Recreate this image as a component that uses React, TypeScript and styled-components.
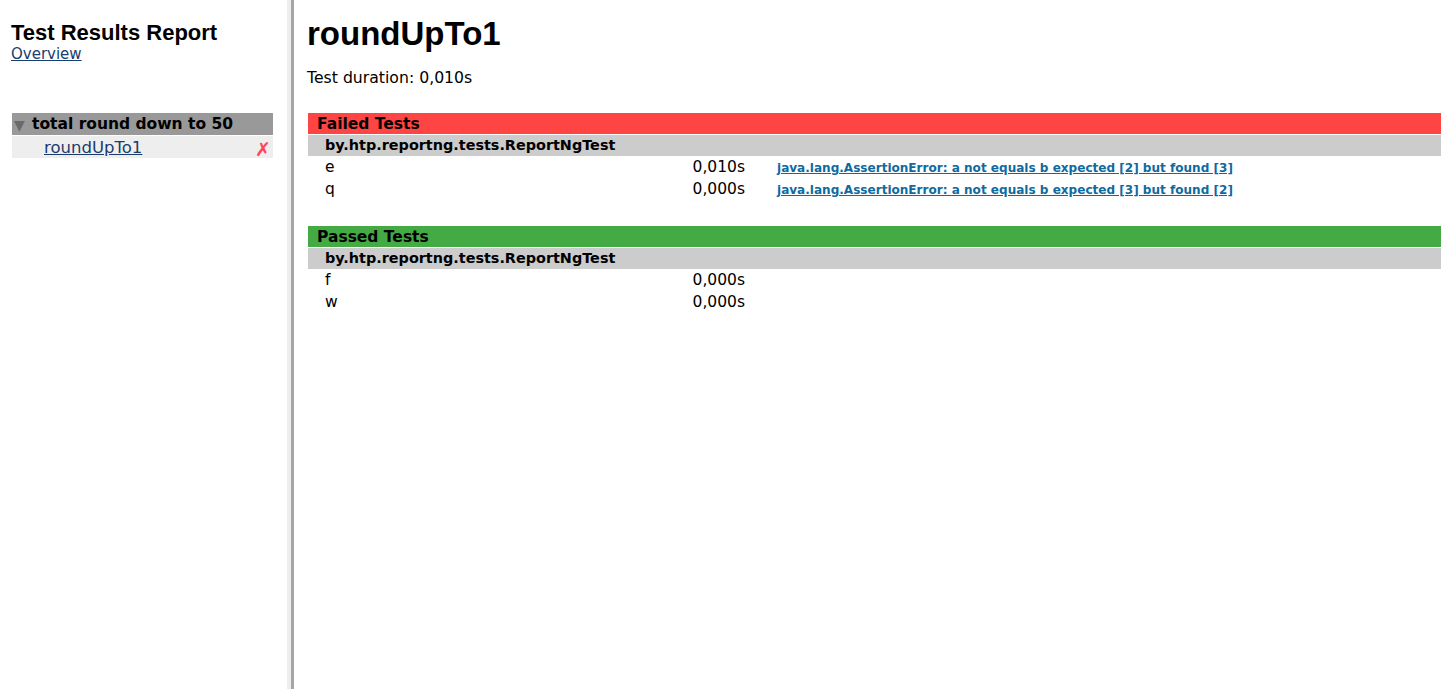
import React from "react";
import styled, { createGlobalStyle } from "styled-components";

const Global = createGlobalStyle`
  html, body { margin: 0; padding: 0; background: #fff; }
  body { font-family: "DejaVu Sans", "Liberation Sans", sans-serif; color: #000; }
`;

const Page = styled.div`
  display: flex;
  height: 689px;
  overflow: hidden;
`;

const Nav = styled.nav`
  width: 287px;
  flex: none;
  box-sizing: border-box;
  padding: 20px 14px 0 12px;
`;

const Divider = styled.div`
  flex: none;
  width: 4px;
  background: #eeeeee;
  border-right: 3px solid #a6a6a6;
`;

const Main = styled.main`
  flex: 1;
  min-width: 0;
  padding: 15px 2px 0 14px;
`;

const SiteTitle = styled.h1`
  font-family: "Liberation Sans", Arial, sans-serif;
  font-weight: bold;
  font-size: 22px;
  line-height: 25px;
  margin: 0 0 0 -1px;
`;

const NavLink = styled.a<{ $size: number }>`
  color: #1a3c6e;
  text-decoration: underline;
  font-size: ${(p) => p.$size}px;
  cursor: pointer;
`;

const OverviewLine = styled.div`
  line-height: 18px;
  margin-left: -1px;
`;

const Tree = styled.div`
  margin-top: 50px;
  display: flex;
  flex-direction: column;
  gap: 1px;
`;

const SuiteRow = styled.div`
  display: flex;
  align-items: center;
  height: 22px;
  background: #999999;
  font-weight: bold;
  font-size: 15.5px;
  gap: 5px;
  padding-left: 2px;
`;

const Triangle = styled.span`
  color: #6a6a6a;
  font-size: 14px;
  width: 13px;
  margin-top: 2px;
`;

const TestRow = styled.div`
  display: flex;
  align-items: center;
  justify-content: space-between;
  height: 22px;
  background: #eeeeee;
  padding: 0 2px 0 32px;
`;

const FailMark = styled.span`
  color: #ff4455;
  font-weight: bold;
  font-size: 19px;
  margin-top: 3px;
`;

const Heading = styled.h2`
  font-family: "Liberation Sans", Arial, sans-serif;
  font-weight: bold;
  font-size: 33px;
  line-height: 38px;
  margin: 0 0 0 -1px;
`;

const Duration = styled.p`
  font-size: 15.7px;
  line-height: 20px;
  margin: 15px 0 25px -1px;
`;

const Section = styled.section`
  margin-bottom: 26px;
`;

const SectionBar = styled.div<{ $tone: "fail" | "pass" }>`
  height: 21px;
  line-height: 23px;
  background: ${(p) => (p.$tone === "fail" ? "#ff4444" : "#44aa44")};
  border-bottom: 1px solid #fff;
  font-weight: bold;
  font-size: 15.5px;
  padding-left: 9px;
  overflow: hidden;
`;

const ClassBar = styled.div`
  height: 21px;
  line-height: 21px;
  background: #cccccc;
  font-weight: bold;
  font-size: 14.4px;
  padding-left: 17px;
`;

const ResultRow = styled.div`
  display: grid;
  grid-template-columns: 372px 65px 1fr;
  height: 22px;
  align-items: center;
  font-size: 15.5px;
`;

const NameCell = styled.span`
  padding-left: 17px;
`;

const TimeCell = styled.span`
  text-align: right;
`;

const MessageCell = styled.span`
  padding-left: 32px;
`;

const ErrorLink = styled.a`
  color: #0f6aa0;
  font-weight: bold;
  font-size: 12.05px;
  text-decoration: underline;
  cursor: pointer;
`;

type Result = { name: string; time: string; error?: string };

const failed: Result[] = [
  { name: "e", time: "0,010s", error: "java.lang.AssertionError: a not equals b expected [2] but found [3]" },
  { name: "q", time: "0,000s", error: "java.lang.AssertionError: a not equals b expected [3] but found [2]" },
];
const passed: Result[] = [
  { name: "f", time: "0,000s" },
  { name: "w", time: "0,000s" },
];

function ResultSection({ title, tone, rows }: { title: string; tone: "fail" | "pass"; rows: Result[] }) {
  return (
    <Section>
      <SectionBar $tone={tone}>{title}</SectionBar>
      <ClassBar>by.htp.reportng.tests.ReportNgTest</ClassBar>
      {rows.map((r) => (
        <ResultRow key={r.name}>
          <NameCell>{r.name}</NameCell>
          <TimeCell>{r.time}</TimeCell>
          <MessageCell>{r.error && <ErrorLink>{r.error}</ErrorLink>}</MessageCell>
        </ResultRow>
      ))}
    </Section>
  );
}

export default function App() {
  return (
    <>
      <Global />
      <Page>
        <Nav>
          <SiteTitle>Test Results Report</SiteTitle>
          <OverviewLine>
            <NavLink $size={15}>Overview</NavLink>
          </OverviewLine>
          <Tree>
            <SuiteRow>
              <Triangle>▼</Triangle>
              total round down to 50
            </SuiteRow>
            <TestRow>
              <NavLink $size={16.5}>roundUpTo1</NavLink>
              <FailMark>✗</FailMark>
            </TestRow>
          </Tree>
        </Nav>
        <Divider />
        <Main>
          <Heading>roundUpTo1</Heading>
          <Duration>Test duration: 0,010s</Duration>
          <ResultSection title="Failed Tests" tone="fail" rows={failed} />
          <ResultSection title="Passed Tests" tone="pass" rows={passed} />
        </Main>
      </Page>
    </>
  );
}
